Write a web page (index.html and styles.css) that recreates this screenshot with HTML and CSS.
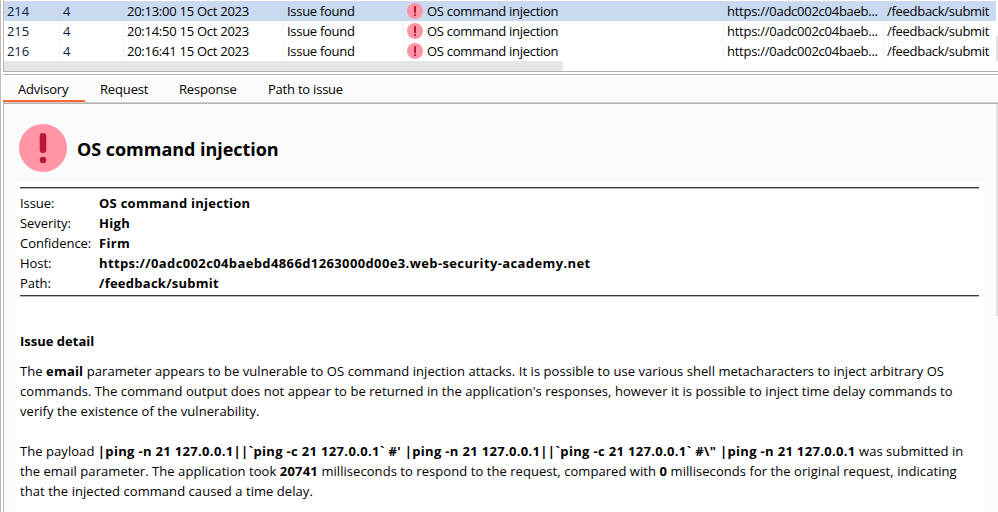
FILE: index.html
```
<!DOCTYPE html>
<html lang="en">
<head>
<meta charset="utf-8">
<title>OS command injection</title>
<link rel="stylesheet" href="styles.css">
</head>
<body>
<svg class="defs" width="0" height="0">
  <symbol id="alert" viewBox="0 0 48 48">
    <circle cx="24" cy="24" r="24" fill="#ff95a6"/>
    <rect x="20.7" y="9" width="6.6" height="20" rx="3" fill="#bb1933"/>
    <circle cx="24" cy="36" r="3.3" fill="#bb1933"/>
  </symbol>
  <symbol id="alert-small" viewBox="0 0 16 16">
    <circle cx="8" cy="8" r="8" fill="#ff95a6"/>
    <rect x="7" y="3" width="2" height="7" rx=".6" fill="#bb1933"/>
    <rect x="7" y="11" width="2" height="2" rx=".5" fill="#bb1933"/>
  </symbol>
</svg>
<div class="frame">
  <section class="log">
    <div class="rows">
      <div class="row selected"><span class="id">214</span><span class="task">4</span><span>20:13:00 15 Oct 2023</span><span class="kind">Issue found</span><span class="type"><svg><use href="#alert-small"/></svg>OS command injection</span><span>https://0adc002c04baeb...</span><span class="kind">/feedback/submit</span></div>
      <div class="row"><span class="id">215</span><span class="task">4</span><span>20:14:50 15 Oct 2023</span><span class="kind">Issue found</span><span class="type"><svg><use href="#alert-small"/></svg>OS command injection</span><span>https://0adc002c04baeb...</span><span class="kind">/feedback/submit</span></div>
      <div class="row"><span class="id">216</span><span class="task">4</span><span>20:16:41 15 Oct 2023</span><span class="kind">Issue found</span><span class="type"><svg><use href="#alert-small"/></svg>OS command injection</span><span>https://0adc002c04baeb...</span><span class="kind">/feedback/submit</span></div>
    </div>
    <div class="vtrack"><div class="vthumb"></div></div>
    <div class="hthumb"></div>
  </section>
  <nav class="tabs">
    <span class="tab active">Advisory</span><span class="tab request">Request</span><span class="tab response">Response</span><span class="tab path">Path to issue</span>
  </nav>
  <main class="advisory">
    <div class="content">
      <header class="title"><svg><use href="#alert"/></svg><h1>OS command injection</h1></header>
      <article class="sheet">
        <dl class="summary">
          <dt>Issue:</dt><dd>OS command injection</dd>
          <dt>Severity:</dt><dd class="tight">High</dd>
          <dt>Confidence:</dt><dd class="tight">Firm</dd>
          <dt>Host:</dt><dd class="host">https://0adc002c04baebd4866d1263000d00e3.web-security-academy.net</dd>
          <dt>Path:</dt><dd>/feedback/submit</dd>
        </dl>
        <h2>Issue detail</h2>
        <p>The <b>email</b> parameter appears to be vulnerable to OS command injection attacks. It is possible to use various shell metacharacters to inject arbitrary OS<br>commands. The command output does not appear to be returned in the application's responses, however it is possible to inject time delay commands to<br>verify the existence of the vulnerability.</p>
        <p>The payload <b class="payload">|ping -n 21 127.0.0.1||`ping -c 21 127.0.0.1` #' |ping -n 21 127.0.0.1||`ping -c 21 127.0.0.1` #\" |ping -n 21 127.0.0.1</b> was submitted in<br>the email parameter. The application took <b>20741</b> milliseconds to respond to the request, compared with <b>0</b> milliseconds for the original request, indicating<br>that the injected command caused a time delay.</p>
      </article>
    </div>
    <div class="scroll"></div>
  </main>
</div>
</body>
</html>
```
FILE: styles.css
```
* { box-sizing: border-box; margin: 0; }
html, body { height: 100%; overflow: hidden; }
body {
  background: #fff;
  color: #000;
  font: 13px/20px "Open Sans", "Noto Sans", sans-serif;
  white-space: nowrap;
}
.defs { display: block; }
.frame { height: 512px; border-left: 1px solid #c3b9bb; padding-left: 2px; display: flex; flex-direction: column; }

.log {
  height: 72px;
  flex: none;
  padding-top: 1px;
  border-left: 1px solid #bab4b5;
  border-bottom: 1px solid #b4b0b1;
  display: grid;
  grid-template-columns: 1fr 2px;
  grid-template-rows: 60px 10px;
}
.row {
  height: 20px;
  display: grid;
  grid-template-columns: 55px 64px 160px 120px 320px 160px 1fr;
  letter-spacing: -.26px;
}
.row span { padding-left: 3px; border-left: 1px solid #f4f4f4; overflow: hidden; }
.row span:first-child { border-left: 0; }
.row .id, .row .task { letter-spacing: -.1px; color: #0a1a3c; }
.row .kind { letter-spacing: -.29px; }
.row .type { display: flex; gap: 4px; align-items: center; letter-spacing: -.29px; }
.row .type svg { width: 16px; height: 16px; flex: none; }
.selected { background: #c9d9f0; }
.selected span { border-color: transparent; }
.vtrack { padding-top: 35px; background: #fff; }
.vthumb { height: 25px; background: #e4e4e4; }
.hthumb { width: 559px; background: #e6e6e6; }

.tabs {
  height: 29px;
  flex: none;
  margin-top: 2px;
  border-top: 1px solid #b4b0b1;
  padding-top: 2px;
  background: #fbfbfb content-box;
  box-shadow: inset 0 -1px #cfcfcf;
  display: flex;
  line-height: 24px;
  letter-spacing: -.15px;
}
.active { width: 82px; height: 25px; padding-left: 15px; box-shadow: inset 0 -2px #ff6633; letter-spacing: -.2px; }
.request { margin-left: 15px; width: 79px; }
.response { width: 89px; }
.path { letter-spacing: -.22px; }

.advisory {
  flex: 1;
  min-height: 0;
  display: grid;
  grid-template-columns: 1fr 2px;
  border-left: 1px solid #bab4b5;
  background: #fbfbfb;
  border-top: 1px solid #b4b0b1;
}
.content { padding: 20px 10px 0; }
.title { height: 58px; display: flex; gap: 10px; padding-left: 5px; }
.title svg { width: 48px; height: 48px; }
h1 { font-size: 18px; line-height: 50px; font-weight: 700; letter-spacing: -.04px; }
.sheet { background: #fff; height: 330px; padding: 5px 7px 0 6px; letter-spacing: .057px; }
.summary {
  display: grid;
  grid-template-columns: 79px 1fr;
  height: 109px;
  padding-top: 5px;
  border-top: 1px solid #383838;
  border-bottom: 1px solid #383838;
  box-shadow: 0 1px #b4b4b4, inset 0 1px #b4b4b4;
  letter-spacing: -.06px;
  align-content: start;
}
dd { font-weight: 700; letter-spacing: .26px; }
.tight { letter-spacing: .3px; }
.host { letter-spacing: .38px; }
h2 { margin: 35px 0 10px; font-size: 13px; line-height: 20px; letter-spacing: 0; }
p + p { margin-top: 20px; }
b { letter-spacing: .2px; }
.payload { letter-spacing: .33px; }
.scroll { height: 212px; background: #e3e3e3; }
```
